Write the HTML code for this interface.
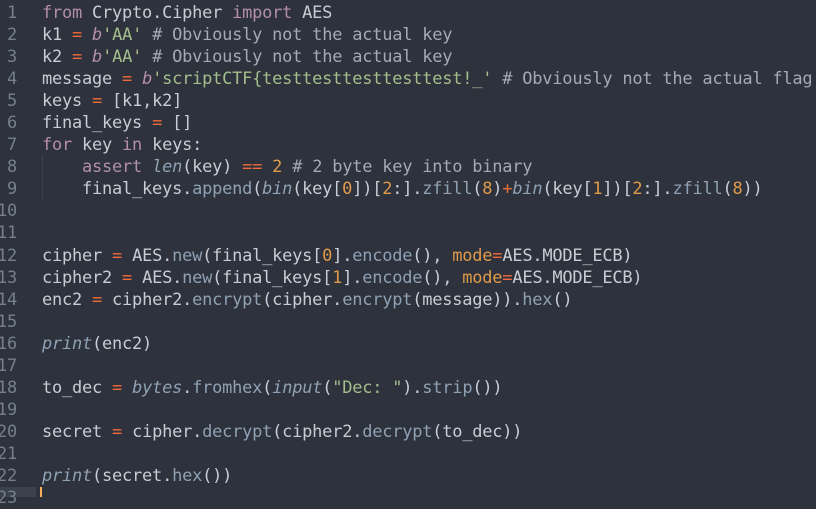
<!DOCTYPE html>
<html><head><style>
html,body{margin:0;padding:0;width:816px;height:493px;overflow:hidden;background:#2d323c;}
#c{position:absolute;top:2px;left:0;width:816px;font-family:"DejaVu Sans Mono","Liberation Mono",monospace;font-size:17px;letter-spacing:-0.23px;line-height:22.05px;color:#c8ccd4;}
.l{height:22.05px;position:relative}
.n{position:absolute;left:-20px;width:37px;text-align:right;color:#75808c}
.t{position:absolute;left:42px;white-space:pre}
.k{color:#b48ead}.o{color:#f26b3a}.s{color:#a3be8c}.c{color:#a3aab6}.d{color:#e09a4a}.f{color:#8fa1b3}.i{color:#8fa1b3;font-style:italic}.bi{color:#b48ead;font-style:italic}
#g{position:absolute;left:0;top:487px;width:36px;height:10px;background:#3b414d}
#cur{position:absolute;left:40px;top:487px;width:2px;height:10px;background:#f9ae58}
#ind{position:absolute;left:42px;top:156px;width:0;height:44px;border-left:1px dotted #4a505c}
</style></head><body>
<div id="g"></div><div id="ind"></div>
<div id="c"><div class="l"><span class="n">1</span><span class="t"><span class="k">from</span> Crypto.Cipher <span class="k">import</span> AES</span></div><div class="l"><span class="n">2</span><span class="t">k1 <span class="o">=</span> <span class="bi">b</span><span class="s">'AA'</span> <span class="c"># Obviously not the actual key</span></span></div><div class="l"><span class="n">3</span><span class="t">k2 <span class="o">=</span> <span class="bi">b</span><span class="s">'AA'</span> <span class="c"># Obviously not the actual key</span></span></div><div class="l"><span class="n">4</span><span class="t">message <span class="o">=</span> <span class="bi">b</span><span class="s">'scriptCTF{testtesttesttesttest!_'</span> <span class="c"># Obviously not the actual flag</span></span></div><div class="l"><span class="n">5</span><span class="t">keys <span class="o">=</span> [k1,k2]</span></div><div class="l"><span class="n">6</span><span class="t">final_keys <span class="o">=</span> []</span></div><div class="l"><span class="n">7</span><span class="t"><span class="k">for</span> key <span class="k">in</span> keys:</span></div><div class="l"><span class="n">8</span><span class="t">    <span class="k">assert</span> <span class="i">len</span>(key) <span class="o">==</span> <span class="d">2</span> <span class="c"># 2 byte key into binary</span></span></div><div class="l"><span class="n">9</span><span class="t">    final_keys.<span class="f">append</span>(<span class="i">bin</span>(key[<span class="d">0</span>])[<span class="d">2</span>:].<span class="f">zfill</span>(<span class="d">8</span>)<span class="o">+</span><span class="i">bin</span>(key[<span class="d">1</span>])[<span class="d">2</span>:].<span class="f">zfill</span>(<span class="d">8</span>))</span></div><div class="l"><span class="n">10</span></div><div class="l"><span class="n">11</span></div><div class="l"><span class="n">12</span><span class="t">cipher <span class="o">=</span> AES.<span class="f">new</span>(final_keys[<span class="d">0</span>].<span class="f">encode</span>(), <span class="d">mode</span><span class="o">=</span>AES.MODE_ECB)</span></div><div class="l"><span class="n">13</span><span class="t">cipher2 <span class="o">=</span> AES.<span class="f">new</span>(final_keys[<span class="d">1</span>].<span class="f">encode</span>(), <span class="d">mode</span><span class="o">=</span>AES.MODE_ECB)</span></div><div class="l"><span class="n">14</span><span class="t">enc2 <span class="o">=</span> cipher2.<span class="f">encrypt</span>(cipher.<span class="f">encrypt</span>(message)).<span class="f">hex</span>()</span></div><div class="l"><span class="n">15</span></div><div class="l"><span class="n">16</span><span class="t"><span class="i">print</span>(enc2)</span></div><div class="l"><span class="n">17</span></div><div class="l"><span class="n">18</span><span class="t">to_dec <span class="o">=</span> <span class="i">bytes</span>.<span class="f">fromhex</span>(<span class="i">input</span>(<span class="s">"Dec: "</span>).<span class="f">strip</span>())</span></div><div class="l"><span class="n">19</span></div><div class="l"><span class="n">20</span><span class="t">secret <span class="o">=</span> cipher.<span class="f">decrypt</span>(cipher2.<span class="f">decrypt</span>(to_dec))</span></div><div class="l"><span class="n">21</span></div><div class="l"><span class="n">22</span><span class="t"><span class="i">print</span>(secret.<span class="f">hex</span>())</span></div><div class="l"><span class="n">23</span></div></div>
<div id="cur"></div>
</body></html>
